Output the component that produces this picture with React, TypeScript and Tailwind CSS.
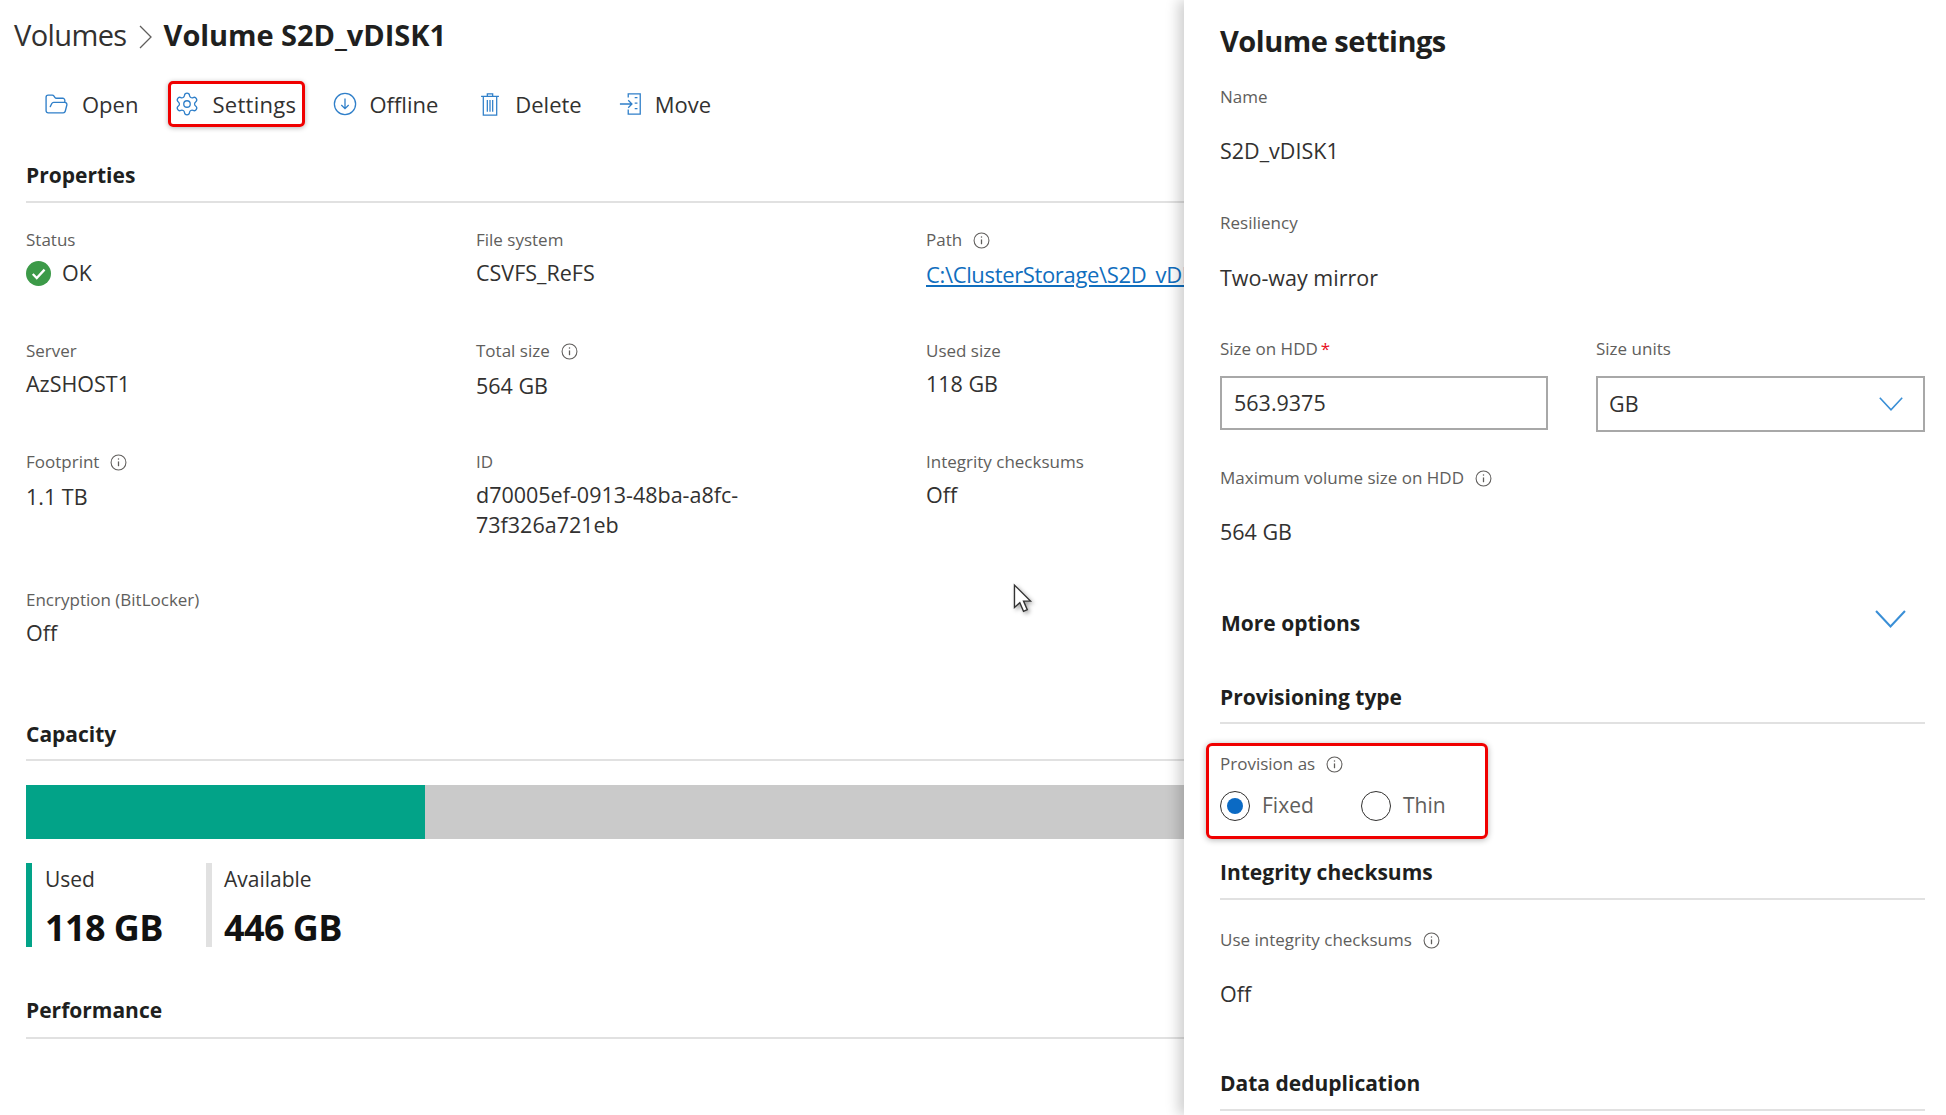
import React from "react";
import { FolderOpen, Settings } from "lucide-react";

const Info = ({ className = "" }: { className?: string }) => (
  <svg viewBox="0 0 16 16" className={`w-[17px] h-[17px] shrink-0 ${className}`} fill="none" stroke="#605e5c" strokeWidth="1">
    <circle cx="8" cy="8" r="7" />
    <path d="M8 7v4.5" strokeWidth="1.2" />
    <circle cx="8" cy="4.8" r="0.7" fill="#605e5c" stroke="none" />
  </svg>
);

const Chevron = ({ size }: { size: number }) => (
  <svg width={size} height={size * 0.6} viewBox="0 0 30 18" fill="none" stroke="#3a8fd6" strokeWidth="2">
    <path d="M1 1l14 15L29 1" />
  </svg>
);

const Label = ({ children, info }: { children: React.ReactNode; info?: boolean }) => (
  <div className="flex items-center gap-[11px] h-[20px] text-[17px] leading-[20px] text-[#605e5c]">
    <span>{children}</span>
    {info && <Info />}
  </div>
);

const Value = ({ children }: { children: React.ReactNode }) => (
  <div className="text-[21.5px] leading-[30px] text-[#323130]">{children}</div>
);

const Section = ({ title, className = "" }: { title: string; className?: string }) => (
  <div className={`border-b-2 border-[#e1e1e1] text-[21px] leading-[26px] font-bold text-[#201f1e] ${className}`}>{title}</div>
);

const Prop = ({ label, info, children, h }: { label: string; info?: boolean; children: React.ReactNode; h: string }) => (
  <div className={`flex flex-col gap-[8px] ${h}`}>
    <Label info={info}>{label}</Label>
    {children}
  </div>
);

const Tool = ({ icon, label, boxed, gap }: { icon: React.ReactNode; label: string; boxed?: boolean; gap: string }) => (
  <div className={`flex items-center ${gap} h-[46px] rounded-[5px] text-[22px] text-[#323130] ${boxed ? "border-[3px] border-[#f00000] shadow-[0_1px_5px_rgba(0,0,0,0.3)] px-[3px] w-[137px] tracking-[0.3px]" : ""}`}>
    {icon}
    <span>{label}</span>
  </div>
);

const OfflineIcon = () => (
  <svg viewBox="0 0 26 26" className="w-[24px] h-[24px]" fill="none" stroke="#2f7fc9" strokeWidth="1.4">
    <circle cx="13" cy="13" r="11.5" />
    <path d="M13 7v11M9 14l4 4 4-4" />
  </svg>
);
const TrashIcon = () => (
  <svg viewBox="0 0 22 28" className="w-[20px] h-[25px]" fill="none" stroke="#2f7fc9" strokeWidth="1.4">
    <path d="M1 5h20M8 5V2h6v3M3.5 5v21h15V5M8 9v13M11 9v13M14 9v13" />
  </svg>
);
const MoveIcon = () => (
  <svg viewBox="0 0 26 26" className="w-[24px] h-[24px]" fill="none" stroke="#2f7fc9" strokeWidth="1.4">
    <path d="M10 6V2h13v22H10v-5M1 13h13M10 9l4 4-4 4M17 6h3M17 12h3M17 18h3" />
  </svg>
);

const Radio = ({ on, label, w }: { on?: boolean; label: string; w: string }) => (
  <div className={`flex items-center gap-[12px] ${w}`}>
    <div className="w-[30px] h-[30px] rounded-full border-[1.5px] border-[#323130] flex items-center justify-center">
      {on && <div className="w-[16px] h-[16px] rounded-full bg-[#0b6ac4]" />}
    </div>
    <span className="text-[21px] text-[#605e5c]">{label}</span>
  </div>
);

export default function App() {
  return (
    <div className="w-[1946px] h-[1115px] overflow-hidden bg-white flex font-['Open_Sans',sans-serif] relative">
      <main className="w-[1184px] shrink-0 overflow-hidden">
        <div className="flex items-center h-[70px] pl-[14px] text-[29px] tracking-[-0.6px]">
          <span className="text-[#323130]">Volumes</span>
          <svg width="16" height="26" viewBox="0 0 16 26" className="ml-[11px] mr-[10px] mt-[4px]" fill="none" stroke="#605e5c" strokeWidth="1.3"><path d="M2 2l11 11L2 24" /></svg>
          <span className="font-bold text-[#201f1e] tracking-[-0.05px]">Volume S2D_vDISK1</span>
        </div>
        <div className="flex items-center h-[46px] pl-[44px] mt-[11px]">
          <Tool gap="gap-[13px]" icon={<FolderOpen size={25} strokeWidth={1.3} color="#2f7fc9" />} label="Open" />
          <div className="ml-[30px]"><Tool gap="gap-[12px]" boxed icon={<Settings size={26} strokeWidth={1.2} color="#2f7fc9" />} label="Settings" /></div>
          <div className="ml-[28px]"><Tool gap="gap-[12px]" icon={<OfflineIcon />} label="Offline" /></div>
          <div className="ml-[42px]"><Tool gap="gap-[15px]" icon={<TrashIcon />} label="Delete" /></div>
          <div className="ml-[37px]"><Tool gap="gap-[12px]" icon={<MoveIcon />} label="Move" /></div>
        </div>
        <div className="pl-[26px] mt-[35px]">
          <Section title="Properties" className="h-[41px]" />
          <div className="grid grid-cols-[450px_450px_1fr] mt-[27px] whitespace-nowrap">
            <Prop label="Status" h="h-[111px]">
              <div className="flex items-center gap-[11px]">
                <svg viewBox="0 0 24 24" className="w-[25px] h-[25px]">
                  <circle cx="12" cy="12" r="12" fill="#3c9a48" />
                  <path d="M6.5 12.5l3.8 3.8 7.5-8" fill="none" stroke="#fff" strokeWidth="2.2" />
                </svg>
                <Value>OK</Value>
              </div>
            </Prop>
            <Prop label="File system" h="h-[111px]"><Value>CSVFS_ReFS</Value></Prop>
            <Prop label="Path" info h="h-[111px]">
              <div className="text-[22px] leading-[32px] text-[#106ebe] underline tracking-[-0.35px]">C:\ClusterStorage\S2D_vDISK1</div>
            </Prop>
            <Prop label="Server" h="h-[111px]"><Value>AzSHOST1</Value></Prop>
            <Prop label="Total size" info h="h-[111px]"><div className="mt-[2px]"><Value>564 GB</Value></div></Prop>
            <Prop label="Used size" h="h-[111px]"><Value>118 GB</Value></Prop>
            <Prop label="Footprint" info h="h-[138px]"><div className="mt-[2px]"><Value>1.1 TB</Value></div></Prop>
            <Prop label="ID" h="h-[138px]"><Value>d70005ef-0913-48ba-a8fc-<br />73f326a721eb</Value></Prop>
            <Prop label="Integrity checksums" h="h-[138px]"><Value>Off</Value></Prop>
            <Prop label="Encryption (BitLocker)" h="h-[105px]"><Value>Off</Value></Prop>
          </div>
          <Section title="Capacity" className="mt-[26px] h-[40px]" />
          <div className="flex h-[54px] mt-[24px]">
            <div className="w-[399px] bg-[#02a388]" />
            <div className="flex-1 bg-[#cacaca]" />
          </div>
          <div className="flex mt-[24px] h-[84px]">
            <div className="w-[180px] border-l-[6px] border-[#02a388] pl-[13px]">
              <div className="text-[21px] leading-[32px] text-[#323130]">Used</div>
              <div className="text-[36px] leading-[50px] font-bold text-[#111] mt-[8px] tracking-[-0.6px]">118 GB</div>
            </div>
            <div className="border-l-[6px] border-[#e1e1e1] pl-[12px]">
              <div className="text-[21px] leading-[32px] text-[#323130]">Available</div>
              <div className="text-[36px] leading-[50px] font-bold text-[#111] mt-[8px] tracking-[-0.6px]">446 GB</div>
            </div>
          </div>
          <Section title="Performance" className="mt-[50px] h-[42px]" />
        </div>
      </main>

      <aside className="flex-1 pl-[36px] pr-[21px] shadow-[-6px_0_12px_rgba(0,0,0,0.18)] z-10 bg-white whitespace-nowrap">
        <div className="text-[29px] leading-[36px] font-bold text-[#201f1e] mt-[23px] tracking-[-0.5px]">Volume settings</div>
        <div className="mt-[28px]"><Label>Name</Label></div>
        <div className="mt-[29px]"><Value>S2D_vDISK1</Value></div>
        <div className="mt-[47px]"><Label>Resiliency</Label></div>
        <div className="mt-[30px]"><Value>Two-way mirror</Value></div>
        <div className="flex mt-[46px] gap-[48px]">
          <div className="w-[328px]">
            <div className="text-[17px] leading-[20px] text-[#605e5c]">Size on HDD<span className="text-[#e81123] ml-[3px]">*</span></div>
            <div className="mt-[17px] h-[54px] border-2 border-[#a8a8a8] flex items-center pl-[12px]"><Value>563.9375</Value></div>
          </div>
          <div className="w-[329px]">
            <Label>Size units</Label>
            <div className="mt-[17px] h-[56px] border-2 border-[#a8a8a8] flex items-center justify-between pl-[11px] pr-[20px]">
              <Value>GB</Value>
              <Chevron size={24} />
            </div>
          </div>
        </div>
        <div className="mt-[36px]"><Label info>Maximum volume size on HDD</Label></div>
        <div className="mt-[29px]"><Value>564 GB</Value></div>
        <div className="flex items-start justify-between mt-[61px] h-[32px] pr-[19px] pl-[1px]">
          <div className="text-[21px] leading-[30px] font-bold text-[#201f1e]">More options</div>
          <div className="pt-[2px]"><Chevron size={31} /></div>
        </div>
        <Section title="Provisioning type" className="mt-[43px] h-[41px] pt-[1px]" />
        <div className="mt-[19px] ml-[-14px] w-[282px] h-[96px] border-[3px] border-[#f00000] rounded-[6px] shadow-[0_1px_6px_rgba(0,0,0,0.3)] pl-[11px] pt-[8px]">
          <Label info>Provision as</Label>
          <div className="flex items-center mt-[16px]">
            <Radio on label="Fixed" w="w-[141px]" />
            <Radio label="Thin" w="w-[110px]" />
          </div>
        </div>
        <Section title="Integrity checksums" className="mt-[19px] h-[42px] pt-[1px]" />
        <div className="mt-[30px]"><Label info>Use integrity checksums</Label></div>
        <div className="mt-[29px]"><Value>Off</Value></div>
        <Section title="Data deduplication" className="mt-[60px] h-[42px] pt-[1px]" />
      </aside>

      <svg viewBox="0 0 20 30" className="absolute left-[1012px] top-[583px] w-[22px] h-[32px] z-20 drop-shadow-[2px_2px_2px_rgba(0,0,0,0.35)]" fill="#fff" stroke="#333" strokeWidth="1.3">
        <path d="M2 2v21l5-4.5 3.5 8 3.5-1.5-3.5-8H17z" />
      </svg>
    </div>
  );
}
